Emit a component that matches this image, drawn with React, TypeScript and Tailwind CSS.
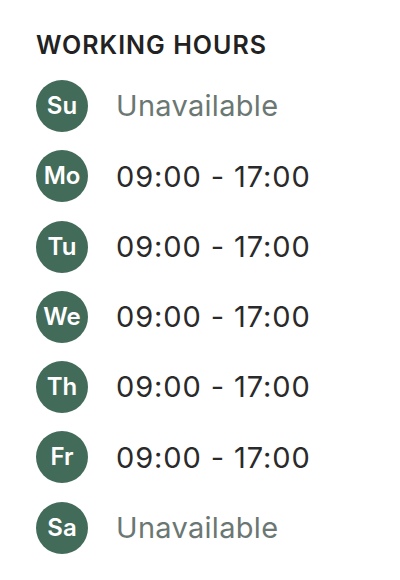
import React from 'react';

const days = [
  { short: 'Su', hours: null },
  { short: 'Mo', hours: '09:00 - 17:00' },
  { short: 'Tu', hours: '09:00 - 17:00' },
  { short: 'We', hours: '09:00 - 17:00' },
  { short: 'Th', hours: '09:00 - 17:00' },
  { short: 'Fr', hours: '09:00 - 17:00' },
  { short: 'Sa', hours: null },
];

export default function App() {
  return (
    <div className="w-[400px] h-[580px] bg-white font-['Inter',sans-serif] pl-9 pt-[32px]">
      <h2 className="text-[25px] leading-[26px] font-semibold text-[#222] tracking-[1px]">WORKING HOURS</h2>
      <ul className="mt-[22px] flex flex-col gap-[18.3px]">
        {days.map((d) => (
          <li key={d.short} className="flex items-center gap-7">
            <div className="w-[52px] h-[52px] rounded-full bg-[#436b5a] flex items-center justify-center text-white text-[24px] font-semibold">
              {d.short}
            </div>
            {d.hours ? (
              <span className="text-[29px] tracking-[0.9px] text-[#2a2a2a]">{d.hours}</span>
            ) : (
              <span className="text-[29px] tracking-[0.3px] text-[#6b7773]">Unavailable</span>
            )}
          </li>
        ))}
      </ul>
    </div>
  );
}
